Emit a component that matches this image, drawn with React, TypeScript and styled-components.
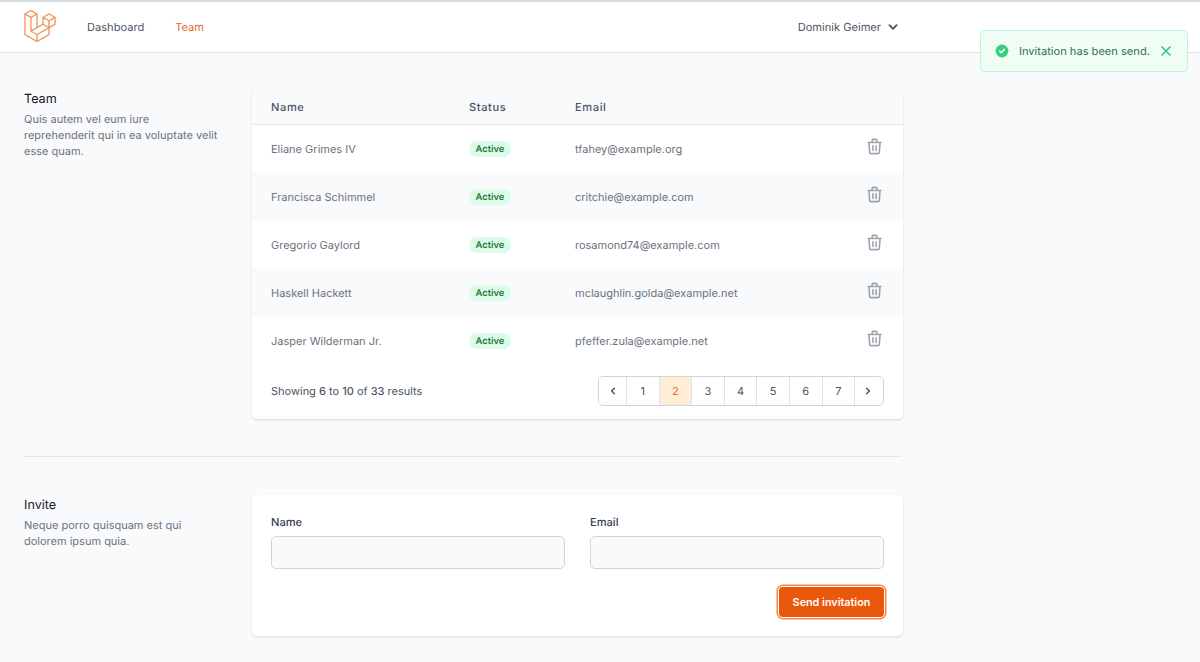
import React from 'react';
import styled, { createGlobalStyle } from 'styled-components';
import { HiCheckCircle, HiChevronDown, HiChevronLeft, HiChevronRight, HiOutlineTrash, HiOutlineX } from 'react-icons/hi';
import { SiLaravel } from 'react-icons/si';

const GlobalStyle = createGlobalStyle`
  html, body {
    margin: 0;
    padding: 0;
    background: #f9fafb;
    font-family: Inter, "Liberation Sans", sans-serif;
    font-size: 11px;
    color: #6b7280;
    text-rendering: geometricPrecision;
  }
  * { box-sizing: border-box; }
`;

const Page = styled.div`
  position: relative;
  width: 1200px;
  height: 662px;
  overflow: hidden;
  background: #f9fafb;
`;

const Header = styled.header`
  display: flex;
  align-items: center;
  height: 53px;
  padding: 0 298px 0 24px;
  background: #fff;
  border-top: 2px solid #d9dadc;
  border-bottom: 1px solid #e2e4e7;
`;

const Logo = styled.div`
  display: flex;
  width: 32px;
  margin: -2px 31px 0 0;
  color: #ee8a4a;

  svg {
    stroke: currentColor;
    stroke-width: 0.15;
  }
`;

const NavLink = styled.a<{ $active?: boolean }>`
  margin-right: 31px;
  font-size: 11.1px;
  color: ${({ $active }) => ($active ? '#e66a2c' : '#4b5563')};
`;

const UserMenu = styled.div`
  display: flex;
  align-items: center;
  gap: 3px;
  margin-left: auto;
  font-size: 11.1px;
  color: #4b5563;
`;

const Main = styled.main`
  display: flex;
  flex-direction: column;
  width: 903px;
  padding: 36px 0 0 24px;
`;

const Section = styled.section`
  display: grid;
  grid-template-columns: 204px 651px;
  column-gap: 24px;
`;

const Divider = styled.hr`
  width: 878px;
  height: 1px;
  margin: 37px 0 38px;
  border: 0;
  background: #e5e7eb;
`;

const SectionInfo = styled.div`
  padding-top: 3px;
`;

const SectionTitle = styled.h3`
  margin: 0 0 3px;
  font-size: 12.6px;
  font-weight: 400;
  line-height: 16px;
  color: #111827;
`;

const SectionText = styled.p`
  max-width: 197px;
  margin: 0;
  font-size: 11px;
  line-height: 16px;
  color: #6b7280;
`;

const Card = styled.div`
  background: #fff;
  border-radius: 5px;
  box-shadow: 0 1px 3px rgba(0, 0, 0, 0.1), 0 1px 2px rgba(0, 0, 0, 0.04);
  overflow: hidden;
`;

const RowGrid = styled.div`
  display: grid;
  grid-template-columns: 198px 106px 1fr 48px;
  align-items: center;
`;

const TableHead = styled(RowGrid)`
  height: 36px;
  padding-left: 19px;
  background: #f9fafb;
  border-bottom: 1px solid #e5e7eb;
  font-size: 11.1px;
  font-weight: 500;
  letter-spacing: 0.6px;
  color: #4b5563;
`;

const TableRow = styled(RowGrid)<{ $striped?: boolean }>`
  height: 48px;
  padding-left: 19px;
  background: ${({ $striped }) => ($striped ? '#f9fafb' : '#fff')};
  font-size: 11px;
  color: #6b7280;
`;

const Badge = styled.span`
  justify-self: start;
  height: 16px;
  padding: 0 6.5px;
  border-radius: 999px;
  background: #dcfce7;
  color: #1e7a46;
  font-size: 9.4px;
  font-weight: 600;
  line-height: 17px;
`;

const DeleteButton = styled.span`
  display: flex;
  margin: -6px 0 0 10px;
  color: #9ca3af;
`;

const TableFooter = styled.div`
  display: flex;
  align-items: center;
  justify-content: space-between;
  height: 54px;
  padding: 0 19px 2px;
  font-size: 11px;
  color: #4b5563;

  b {
    font-weight: 500;
  }
`;

const Pager = styled.div`
  display: flex;
  width: 286px;
  height: 30px;
  background: #fff;
  border: 1px solid #d1d5db;
  border-radius: 5px;
  overflow: hidden;
`;

const PageCell = styled.span<{ $active?: boolean; $edge?: boolean }>`
  display: flex;
  align-items: center;
  justify-content: center;
  width: ${({ $edge }) => ($edge ? '27px' : '32.6px')};
  border-left: 1px solid #e0e2e6;
  font-size: 11px;
  background: ${({ $active }) => ($active ? '#ffedd5' : '#fff')};
  color: ${({ $active }) => ($active ? '#e66a2c' : '#4b5563')};

  &:first-child {
    border-left: 0;
  }
`;

const InviteForm = styled.form`
  display: flex;
  flex-direction: column;
  padding: 20px 19px 19px;
`;

const Fields = styled.div`
  display: grid;
  grid-template-columns: 1fr 1fr;
  gap: 25px;
`;

const Field = styled.label`
  display: flex;
  flex-direction: column;
  gap: 7px;
  font-size: 11.1px;
  font-weight: 500;
  line-height: 14px;
  color: #374151;
`;

const Input = styled.input`
  height: 33px;
  padding: 0 10px;
  background: #f9fafb;
  border: 1px solid #d1d5db;
  border-radius: 5px;
`;

const SubmitButton = styled.button`
  align-self: flex-end;
  width: 105px;
  height: 30px;
  margin-top: 18px;
  padding: 0;
  border: 0;
  border-radius: 4px;
  background: #ea580c;
  box-shadow: 0 0 0 1px #fff, 0 0 0 2.5px #f58a3c;
  color: #fff;
  font-family: inherit;
  font-size: 10.8px;
  font-weight: 600;
`;

const Toast = styled.div`
  position: absolute;
  top: 30px;
  right: 12px;
  display: flex;
  align-items: center;
  width: 208px;
  height: 42px;
  padding: 0 14px 0 13px;
  background: #f0fdf4;
  border: 1px solid #bbf7d0;
  border-radius: 4px;
  font-size: 11.1px;
  color: #2f6f4f;
`;

const ToastIcon = styled.span`
  display: flex;
  margin-right: 9px;
  color: #34d07b;
`;

const ToastClose = styled.span`
  display: flex;
  margin: 0 -1px 0 auto;
  color: #34c77b;

  svg {
    stroke-width: 2.5;
  }
`;

const members = [
  { name: 'Eliane Grimes IV', email: 'tfahey@example.org' },
  { name: 'Francisca Schimmel', email: 'critchie@example.com' },
  { name: 'Gregorio Gaylord', email: 'rosamond74@example.com' },
  { name: 'Haskell Hackett', email: 'mclaughlin.golda@example.net' },
  { name: 'Jasper Wilderman Jr.', email: 'pfeffer.zula@example.net' },
];

export default function App() {
  return (
    <Page>
      <GlobalStyle />
      <Header>
        <Logo>
          <SiLaravel size={32} />
        </Logo>
        <NavLink>Dashboard</NavLink>
        <NavLink $active>Team</NavLink>
        <UserMenu>
          Dominik Geimer
          <HiChevronDown size={18} />
        </UserMenu>
      </Header>

      <Main>
        <Section>
          <SectionInfo>
            <SectionTitle>Team</SectionTitle>
            <SectionText>Quis autem vel eum iure reprehenderit qui in ea voluptate velit esse quam.</SectionText>
          </SectionInfo>
          <Card>
            <TableHead>
              <span>Name</span>
              <span>Status</span>
              <span>Email</span>
            </TableHead>
            {members.map((member, i) => (
              <TableRow key={member.email} $striped={i % 2 === 1}>
                <span>{member.name}</span>
                <Badge>Active</Badge>
                <span>{member.email}</span>
                <DeleteButton>
                  <HiOutlineTrash size={19} />
                </DeleteButton>
              </TableRow>
            ))}
            <TableFooter>
              <span>
                Showing <b>6</b> to <b>10</b> of <b>33</b> results
              </span>
              <Pager>
                <PageCell $edge>
                  <HiChevronLeft size={14} />
                </PageCell>
                {[1, 2, 3, 4, 5, 6, 7].map((page) => (
                  <PageCell key={page} $active={page === 2}>
                    {page}
                  </PageCell>
                ))}
                <PageCell $edge>
                  <HiChevronRight size={14} />
                </PageCell>
              </Pager>
            </TableFooter>
          </Card>
        </Section>

        <Divider />

        <Section>
          <SectionInfo>
            <SectionTitle>Invite</SectionTitle>
            <SectionText>Neque porro quisquam est qui dolorem ipsum quia.</SectionText>
          </SectionInfo>
          <Card>
            <InviteForm>
              <Fields>
                <Field>
                  Name
                  <Input />
                </Field>
                <Field>
                  Email
                  <Input />
                </Field>
              </Fields>
              <SubmitButton type="button">Send invitation</SubmitButton>
            </InviteForm>
          </Card>
        </Section>
      </Main>

      <Toast>
        <ToastIcon>
          <HiCheckCircle size={16} />
        </ToastIcon>
        Invitation has been send.
        <ToastClose>
          <HiOutlineX size={16} />
        </ToastClose>
      </Toast>
    </Page>
  );
}
